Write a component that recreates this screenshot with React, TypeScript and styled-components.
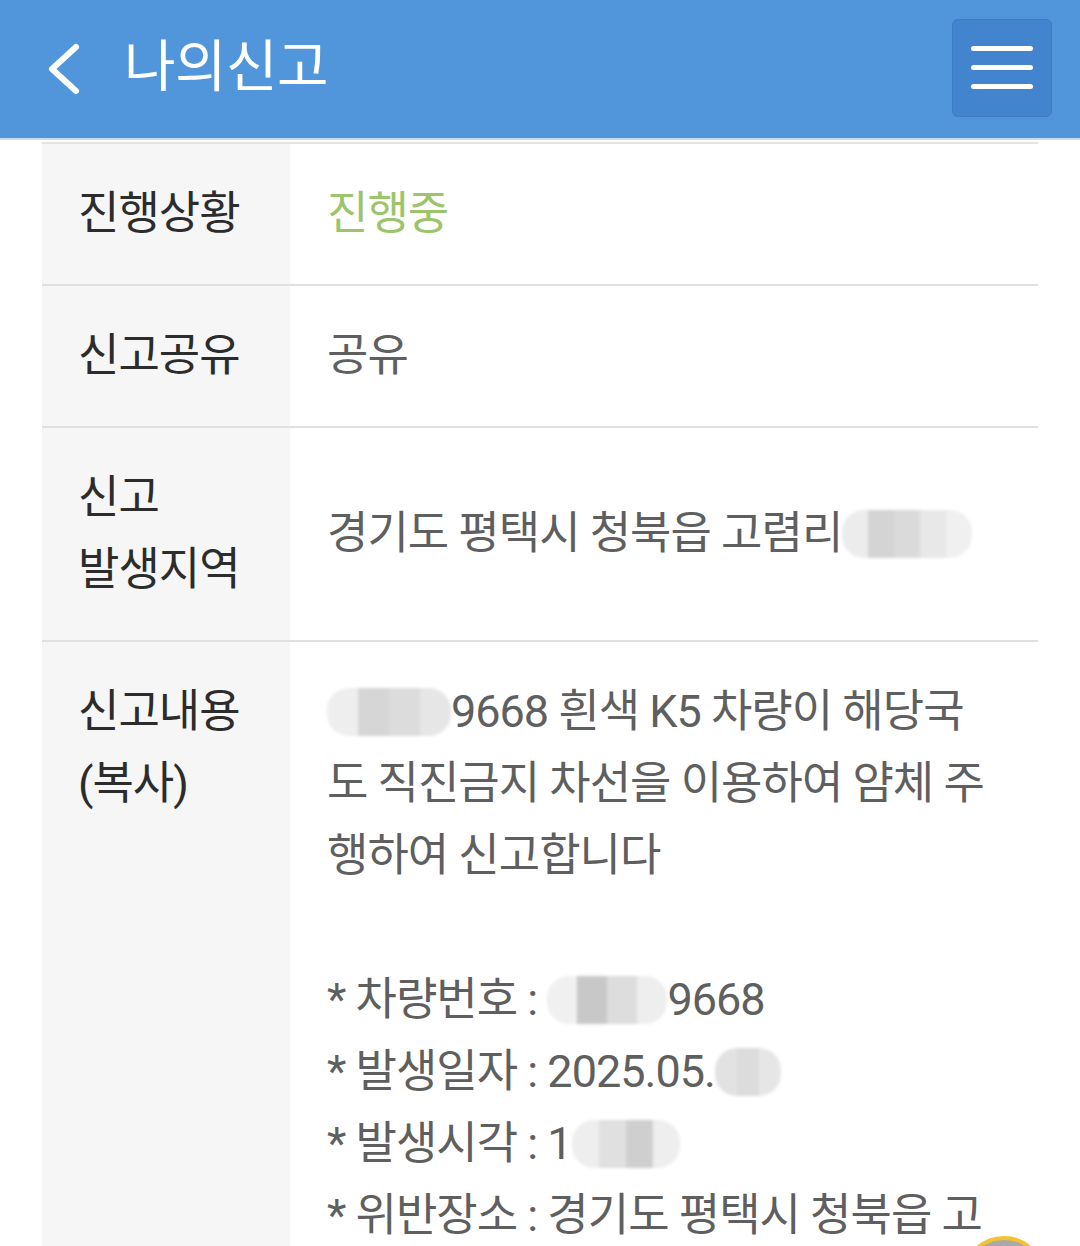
import styled, { createGlobalStyle } from "styled-components";

const GlobalStyle = createGlobalStyle`
  html, body {
    margin: 0;
    padding: 0;
    background: #ffffff;
    overflow: hidden;
  }
  body {
    font-family: Roboto, "Noto Sans CJK KR", sans-serif;
  }
`;

const Page = styled.div`
  width: 1080px;
  height: 1246px;
  overflow: hidden;
  position: relative;
`;

const Header = styled.header`
  height: 138px;
  display: flex;
  align-items: center;
  padding: 0 28px 0 44px;
  background-color: #5196db;
  border-bottom: 2px solid #c9dcea;
  box-sizing: content-box;
`;

const Back = styled.div`
  width: 40px;
  height: 60px;
  display: flex;
  align-items: center;
`;

const Title = styled.h1`
  flex: 1;
  margin: 0 0 0 40px;
  font-size: 56px;
  font-weight: 400;
  color: #ffffff;
  letter-spacing: -0.5px;
  line-height: 1;
  padding-bottom: 4px;
`;

const MenuButton = styled.button`
  width: 100px;
  height: 98px;
  margin-top: -3px;
  display: flex;
  flex-direction: column;
  justify-content: center;
  align-items: center;
  gap: 14px;
  background-color: #4384cf;
  border: 1px solid #3d7bc4;
  border-radius: 6px;
  padding: 0;
`;

const MenuLine = styled.span`
  width: 62px;
  height: 5px;
  border-radius: 3px;
  background: #ffffff;
`;

const Table = styled.div`
  margin: 2px 42px 0;
  border-top: 2px solid #e4e4e4;
`;

const Row = styled.div`
  display: grid;
  grid-template-columns: 248px 1fr;
  border-bottom: 2px solid #e0e0e0;
`;

const Label = styled.div`
  background: #f6f6f6;
  padding: 34px 10px 34px 36px;
  font-size: 45px;
  font-weight: 400;
  line-height: 72px;
  color: #2c2c2c;
  letter-spacing: -1px;
`;

const Value = styled.div<{ $tone?: "green" | "gray"; $top?: boolean }>`
  display: flex;
  align-items: ${(p) => (p.$top ? "flex-start" : "center")};
  padding: 34px 20px 34px 37px;
  font-size: 45px;
  line-height: 72px;
  letter-spacing: -1px;
  color: ${(p) => (p.$tone === "green" ? "#9cc46b" : "#5f5f5f")};
`;

const Content = styled.div`
  white-space: pre-wrap;
  width: 100%;
`;

const Blur = styled.span<{ $w: number; $tiles: string[] }>`
  display: inline-block;
  width: ${(p) => p.$w}px;
  height: 48px;
  vertical-align: -9px;
  border-radius: 22px;
  filter: blur(1.5px);
  background: ${(p) => {
    const step = 100 / p.$tiles.length;
    const stops = p.$tiles
      .map((c, i) => `${c} ${i * step}%, ${c} ${(i + 1) * step}%`)
      .join(", ");
    return `linear-gradient(to right, ${stops})`;
  }};
`;

const Floating = styled.div`
  position: absolute;
  left: 962px;
  top: 1236px;
  width: 76px;
  height: 76px;
  border-radius: 50%;
  background: #a9a9a9;
  border: 4px solid #f1c232;
`;

export default function App() {
  return (
    <Page>
      <GlobalStyle />
      <Header>
        <Back>
          <svg width="40" height="60" viewBox="0 0 40 60">
            <polyline
              points="32,8 8,30 32,52"
              fill="none"
              stroke="#ffffff"
              strokeWidth="6"
              strokeLinecap="round"
              strokeLinejoin="round"
            />
          </svg>
        </Back>
        <Title>나의신고</Title>
        <MenuButton aria-label="menu">
          <MenuLine />
          <MenuLine />
          <MenuLine />
        </MenuButton>
      </Header>

      <Table>
        <Row>
          <Label>진행상황</Label>
          <Value $tone="green">진행중</Value>
        </Row>
        <Row>
          <Label>신고공유</Label>
          <Value>공유</Value>
        </Row>
        <Row>
          <Label>
            신고
            <br />
            발생지역
          </Label>
          <Value>
            <Content>
              경기도 평택시 청북읍 고렴리
              <Blur $w={130} $tiles={["#ececec", "#d4d4d4", "#dadada", "#e8e8e8", "#f0f0f0"]} />
            </Content>
          </Value>
        </Row>
        <Row>
          <Label>
            신고내용
            <br />
            (복사)
          </Label>
          <Value $top>
            <Content>
              <Blur $w={124} $tiles={["#eeeeee", "#d6d6d6", "#dcdcdc", "#e6e6e6"]} />
              {"9668 흰색 K5 차량이 해당국\n도 직진금지 차선을 이용하여 얌체 주\n행하여 신고합니다\n\n* 차량번호 : "}
              <Blur $w={120} $tiles={["#f0f0f0", "#c8c8c8", "#dddddd", "#eeeeee"]} />
              {"9668\n* 발생일자 : 2025.05."}
              <Blur $w={66} $tiles={["#e2e2e2", "#dcdcdc", "#e6e6e6"]} />
              {"\n* 발생시각 : 1"}
              <Blur $w={108} $tiles={["#eeeeee", "#e0e0e0", "#cfcfcf", "#eeeeee"]} />
              {"\n* 위반장소 : 경기도 평택시 청북읍 고렴리"}
            </Content>
          </Value>
        </Row>
      </Table>
      <Floating />
    </Page>
  );
}
